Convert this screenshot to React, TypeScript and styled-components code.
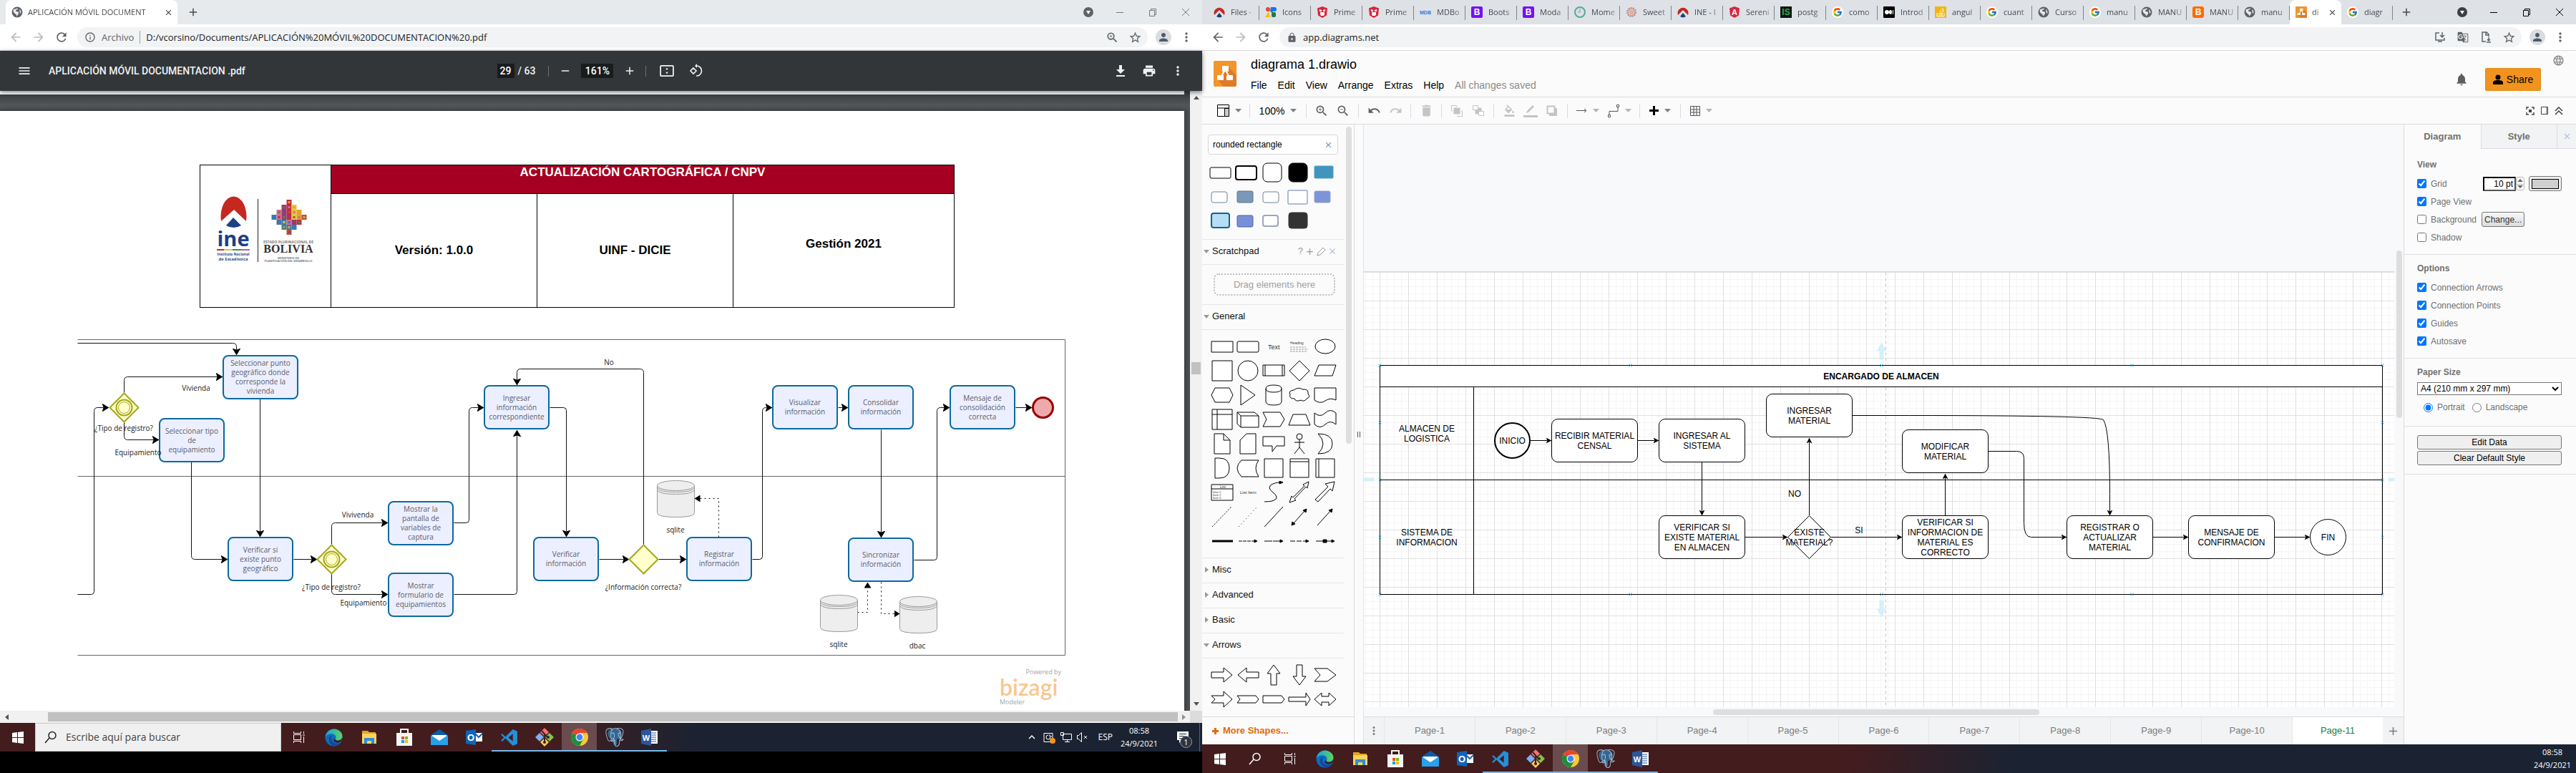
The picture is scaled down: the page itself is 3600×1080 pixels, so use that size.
import React from 'react';
import styled, { createGlobalStyle, css } from 'styled-components';
import {
  MdArrowBack, MdArrowForward, MdRefresh, MdInfoOutline, MdZoomIn, MdZoomOut, MdStarBorder, MdPerson,
  MdMoreVert, MdMenu, MdRemove, MdAdd, MdClose, MdPrint, MdLock, MdNotifications, MdLanguage, MdDelete,
  MdUndo, MdRedo, MdFormatColorFill, MdGTranslate, MdKeyboardArrowUp,
} from 'react-icons/md';
import { FcGoogle } from 'react-icons/fc';
import { SiPostgresql } from 'react-icons/si';

const ui = '"Open Sans", "Noto Sans", sans-serif';
const arial = '"Liberation Sans", Arial, sans-serif';

const Global = createGlobalStyle`
  * { box-sizing: border-box; }
  body { margin: 0; background: #000; font-family: ${arial}; }
  button, input, select { font-family: inherit; }
  button { padding: 0; border: 0; background: none; color: inherit; }
  svg { display: block; flex: none; }
`;

/* ---------- shared shell ---------- */

const Desktop = styled.div`
  display: flex;
  height: 100vh;
  overflow: hidden;
`;
const Screen = styled.section<{ $grow: number; $bottom?: number }>`
  flex: ${p => p.$grow} 1 0;
  min-width: 0;
  display: flex;
  flex-direction: column;
  padding-bottom: ${p => p.$bottom || 0}px;
`;
const TabStrip = styled.header<{ $bg: string }>`
  flex: none;
  height: 34px;
  display: flex;
  align-items: center;
  padding-left: 8px;
  background: ${p => p.$bg};
  font: 11px/16px ${ui};
  color: #45494d;
`;
const Tab = styled.div<{ $w: number; $active?: boolean }>`
  flex: 0 1 ${p => p.$w}px;
  min-width: 0;
  height: 34px;
  display: flex;
  align-items: center;
  gap: 8px;
  padding: 0 6px 0 8px;
  position: relative;
  ${p => p.$active ? css`gap: 7px; background: #fff; border-radius: 8px 8px 0 0;` : css`
    &::after { content: ''; position: absolute; right: 0; top: 8px; height: 20px; width: 1px; background: #808387; }
  `}
`;
const TabText = styled.span`
  flex: 1;
  min-width: 0;
  overflow: hidden;
  white-space: nowrap;
  mask-image: linear-gradient(90deg, #000 calc(100% - 12px), rgba(0, 0, 0, .4));
`;
const StripButton = styled.button<{ $w?: number; $end?: boolean }>`
  width: ${p => p.$w || 46}px;
  height: 30px;
  display: grid;
  place-items: center;
  ${p => p.$end && 'margin-left: auto;'}
`;
const TabClose = styled.button`
  display: grid;
  place-items: center;
  color: #3c4043;
`;
const NavBar = styled.nav`
  flex: none;
  height: 37px;
  display: flex;
  align-items: center;
  padding: 0 6px;
  background: #fff;
  border-bottom: 1px solid #dadce0;
  color: #5f6368;
`;
const NavButton = styled.button<{ $dim?: boolean }>`
  width: 32px;
  height: 28px;
  display: grid;
  place-items: center;
  flex: none;
  color: ${p => p.$dim ? '#babcbe' : '#5f6368'};
`;
const Omnibox = styled.div`
  flex: 1;
  min-width: 0;
  height: 28px;
  margin: 0 6px;
  padding: 0 2px 0 10px;
  display: flex;
  align-items: center;
  gap: 8px;
  border-radius: 14px;
  background: #f1f3f4;
`;
const Chip = styled.span`
  padding-right: 8px;
  border-right: 1px solid #9aa0a6;
  color: #5f6368;
  font: 13px/18px ${ui};
`;
const Address = styled.input`
  flex: 1;
  min-width: 0;
  border: 0;
  padding: 0;
  background: none;
  color: #202124;
  font: 13px/20px ${ui};
  outline: 0;
`;
const OmniActions = styled.div` display: flex; `;
const Avatar = styled.span`
  width: 22px;
  height: 22px;
  border-radius: 50%;
  background: #dadce0;
  color: #4d5a70;
  display: grid;
  place-items: center;
`;

const WindowControls = ({ color, dot }: { color: string; dot: string }) => (
  <>
    <StripButton $end $w={42} aria-label="Search tabs">
      <svg width="16" height="16" viewBox="0 0 16 16"><circle cx="8" cy="8" r="7" fill={dot} /><path d="M5 6h6l-3 5z" fill="#fff" /></svg>
    </StripButton>
    <StripButton aria-label="Minimize"><svg width="12" height="12"><path d="M1 6.500h10" stroke={color} /></svg></StripButton>
    <StripButton aria-label="Restore">
      <svg width="12" height="12" fill="none" stroke={color}><path d="M1.500 3.500h7v8h-7zM3.500 3.500v-2h7v8h-2" /></svg>
    </StripButton>
    <StripButton aria-label="Close window"><svg width="12" height="12"><path d="M1 1l10 10M11 1L1 11" stroke={color} /></svg></StripButton>
  </>
);

/* ---------- favicons ---------- */

const Globe = () => (
  <svg width="16" height="16" viewBox="0 0 16 16">
    <circle cx="8" cy="8" r="7.500" fill="#5f6368" />
    <path d="M3 4c3 0 4-2 6-1 0 2-3 1-3 3s4 0 4 3-2 2-2 5c-1-1-1-3-3-4S2 7 3 4zM11 4c2 1 3 3 2 6-2-1-1-3-2-6z" fill="#e8eaed" />
  </svg>
);
const Ine = () => (
  <svg width="16" height="16" viewBox="0 0 16 16">
    <path d="M1 12A7.500 7.500 0 1 1 15 12L8 5z" fill="#c4281f" />
    <path d="M8 9l4 5a7 7 0 0 1-8 0z" fill="#1d3f7c" />
  </svg>
);
const Badge = ({ bg, text, fg = '#fff', size = 12, r = 2 }: { bg: string; text: string; fg?: string; size?: number; r?: number }) => (
  <svg width="16" height="16" viewBox="0 0 16 16">
    <rect width="16" height="16" rx={r} fill={bg} />
    <text x="8" y={8 + size * 0.36} fontSize={size} fontFamily="Liberation Sans, sans-serif" fontWeight="700" textAnchor="middle" fill={fg}>{text}</text>
  </svg>
);
const Shield = ({ text }: { text?: string }) => (
  <svg width="16" height="16" viewBox="0 0 16 16">
    <path d="M8 0l7 2.500-1 10L8 16l-6-3.500L1 2.500z" fill="#d9253d" />
    {text
      ? <text x="8" y="12" fontSize="11" fontFamily="Liberation Sans, sans-serif" fontWeight="700" textAnchor="middle" fill="#fff">{text}</text>
      : <path d="M4 4l3 1v2H4zM12 4L9 5v2h3zM5 8h6v3l-1 2H6l-1-2z" fill="#fff" />}
  </svg>
);
const Palette = () => (
  <svg width="16" height="16" viewBox="0 0 16 16">
    <circle cx="4" cy="4" r="3" fill="#ea4335" /><path d="M0 15l5-8 2 8z" fill="#fbbc04" /><path d="M8 1h6l-4 8-3-2z" fill="#1a73e8" />
    <circle cx="13" cy="4" r="3" fill="#1a73e8" /><rect x="9" y="8" width="6" height="7" rx="2" fill="#188038" />
  </svg>
);
const Clock = () => (
  <svg width="16" height="16" viewBox="0 0 16 16" fill="none" stroke="#56a99a" strokeWidth="2"><circle cx="8" cy="8" r="7" /><path d="M8 3v5H5" strokeWidth="1" /></svg>
);
const Sweet = () => (
  <svg width="16" height="16" viewBox="0 0 16 16"><circle cx="8" cy="8" r="5.500" fill="#f0c8a8" stroke="#b58fa4" strokeWidth="3" strokeDasharray="2 1" /><circle cx="8" cy="8" r="2" fill="none" stroke="#e5866b" /></svg>
);
const Medium = () => (
  <svg width="16" height="16" viewBox="0 0 16 16"><rect width="16" height="16" rx="1" /><circle cx="5" cy="8" r="3" fill="#fff" /><ellipse cx="10" cy="8" rx="2" ry="3" fill="#fff" /><path d="M13.500 5v6" stroke="#fff" /></svg>
);
const Stack = () => (
  <svg width="16" height="16" viewBox="0 0 16 16"><rect width="16" height="16" fill="#f2b40f" /><path d="M3 9v5h10V9M5 12h6M5 9.500l6 1M6 6.500l5 3M8 4l4 4M10.500 2l2 5" stroke="#fff" fill="none" /></svg>
);
const Drawio = ({ w = 16, h = 16 }: { w?: number; h?: number }) => (
  <svg width={w} height={h} viewBox="0 0 32 36" preserveAspectRatio="none">
    <rect width="32" height="36" rx="2" fill="#f2952a" />
    <path d="M20 8l12 12v14l-2 2H14l-8-9z" fill="#de7b27" />
    <path d="M16 12l-6 12M16 12l7 12" stroke="#fff" strokeWidth="2" />
    <rect x="12" y="7" width="9" height="8" rx="1" fill="#fff" /><rect x="5" y="20" width="9" height="7" rx="1" fill="#fff" /><rect x="18" y="20" width="9" height="7" rx="1" fill="#fff" />
  </svg>
);
const GIcon = () => <svg width="16" height="16"><circle cx="8" cy="8" r="8" fill="#fff" /><FcGoogle x="1" y="1" size={14} /></svg>;

const rightTabs: [React.ReactNode, string][] = [
  [<Ine />, 'Files ·'], [<Palette />, 'Icons'], [<Shield />, 'Prime'], [<Shield />, 'Prime'],
  [<Badge bg="none" text="MDB" fg="#2b7de9" size={7} />, 'MDBo'], [<Badge bg="#7411f4" text="B" />, 'Boots'],
  [<Badge bg="#7411f4" text="B" />, 'Moda'], [<Clock />, 'Mome'], [<Sweet />, 'Sweet'], [<Ine />, 'INE - I'],
  [<Shield text="A" />, 'Sereni'], [<Badge bg="#101510" text="IS" fg="#22b14c" r={0} />, 'postg'], [<GIcon />, 'como'],
  [<Medium />, 'Introd'], [<Stack />, 'angul'], [<GIcon />, 'cuant'], [<Globe />, 'Curso'], [<GIcon />, 'manu'],
  [<Globe />, 'MANU'], [<Badge bg="#ff6a00" text="B" r={3} />, 'MANU'], [<Globe />, 'manu'], [<Drawio />, 'di'], [<GIcon />, 'diagr'],
];

/* ---------- taskbar ---------- */

const Bar = styled.footer<{ $mid: number }>`
  flex: none;
  height: 40px;
  display: flex;
  align-items: stretch;
  background: linear-gradient(90deg, #431c1e 0 ${p => p.$mid - 6}%, #1b2332 ${p => p.$mid + 6}%);
  color: #fff;
  font: 12px/18px ${ui};
`;
const TaskButton = styled.button<{ $open?: boolean; $active?: boolean }>`
  width: 49px;
  display: grid;
  place-items: center;
  background: ${p => p.$active ? '#6b4c4e' : 'none'};
  border-top: 2px solid transparent;
  border-bottom: 2px solid ${p => p.$open ? '#76b9ed' : 'transparent'};
`;
const TaskSearch = styled.label`
  width: 344px;
  display: flex;
  align-items: center;
  gap: 12px;
  padding: 0 12px;
  background: #f0f0f0;
  border: 1px solid #c8c8c8;
  color: #222;
`;
const TaskInput = styled.input`
  flex: 1;
  min-width: 0;
  border: 0;
  padding: 0;
  background: none;
  font: 14px/20px ${ui};
  color: #444;
  outline: 0;
  &::placeholder { color: #444; opacity: 1; }
`;
const Tray = styled.div`
  margin-left: auto;
  display: flex;
  align-items: center;
  gap: 6px;
`;
const Lang = styled.span` padding-left: 8px; `;
const ClockText = styled.time<{ $w: number }>`
  width: ${p => p.$w}px;
  text-align: center;
  font-size: 11px;
`;
const ClockLine = styled.span` display: block; `;
const Notice = styled.button`
  position: relative;
  width: 48px;
  height: 40px;
  display: grid;
  place-items: center;
  border-right: 1px solid #5a616d;
  margin-right: 3px;
`;
const NoticeCount = styled.span`
  position: absolute;
  left: 20px;
  top: 18px;
  width: 17px;
  height: 17px;
  border-radius: 50%;
  border: 1px solid #9aa0a8;
  background: #2d3440;
  font: 11px/15px ${ui};
`;

const WinLogo = () => <svg width="18" height="18" viewBox="0 0 18 18"><path d="M1 3l7-1v7H1zM9 2l8-1v8H9zM1 10h7v7l-7-1zM9 10h8v8l-8-1z" fill="#fff" /></svg>;
const Lens = ({ c }: { c: string }) => <svg width="18" height="18" fill="none" stroke={c} strokeWidth="1.500"><circle cx="11" cy="6.500" r="5" /><path d="M7 10l-6 7" /></svg>;
const TaskView = () => <svg width="18" height="18" fill="none" stroke="#fff"><path d="M1.500 5.500h10v7h-10zM1.500 1v2.500h10V1M1.500 17v-2.500h10V17M15.500 1v3M15.500 8v9M14 6h3" /></svg>;
const Edge = () => (
  <svg width="25" height="25" viewBox="0 0 24 24">
    <defs><linearGradient id="edgeTop" x1="0" x2="1"><stop offset="0" stopColor="#1c9de0" /><stop offset="1" stopColor="#5bd65a" /></linearGradient></defs>
    <circle cx="12" cy="12" r="11.500" fill="#0d6cbd" />
    <path d="M0.500 11C2 4 7 .5 12 .5c7 0 11.500 5 11.500 9.500 0 4-3 6-6 6-2 0-4-1-3-2.500C16 9 12 7 9 7 5 7 2 9 .5 11z" fill="url(#edgeTop)" />
    <path d="M9 9c-2 6 2 11 8 11 2 0 4-1 5-2-1 3-5 5.500-9 5.500C5 22 3 11 9 9z" fill="#16479b" />
    <path d="M14 13.500c-1 1.500 1 2.500 3 2.500 2.500 0 5-1 6-3.500.5 4-3 6.500-6 6.500-5 0-7-5-3-5.500z" fill="#431c1e" />
  </svg>
);
const Folder = () => <svg width="24" height="24" viewBox="0 0 24 24"><path d="M2 3h8l2 2h9v5H2z" fill="#e5a51c" /><path d="M2 7h20v14H2z" fill="#fbd35f" /><path d="M5 13h14v8h-4v-4H9v4H5z" fill="#2f8fd8" /></svg>;
const Store = () => (
  <svg width="24" height="26" viewBox="0 0 24 26"><path d="M1 7h22v18H1z" fill="#f5f5f5" /><path d="M7 7V2h10v5" fill="none" stroke="#f5f5f5" strokeWidth="2" /><path d="M8 12h4v4H8z" fill="#f25022" /><path d="M13 12h4v4h-4z" fill="#7fba00" /><path d="M8 17h4v4H8z" fill="#00a4ef" /><path d="M13 17h4v4h-4z" fill="#ffb900" /></svg>
);
const Mail = () => <svg width="26" height="24" viewBox="0 0 26 24"><path d="M1 9L13 1l12 8v14H1z" fill="#0f5ca8" /><path d="M3 9h20v8H3z" fill="#fff" /><path d="M1 9l12 8 12-8v14H1z" fill="#29a0ea" /></svg>;
const Outlook = () => (
  <svg width="24" height="24" viewBox="0 0 24 24"><path d="M13 6h10v12H13z" fill="#fff" /><path d="M13 7l5 5 5-5" stroke="#0f65ba" strokeWidth="2" fill="none" /><path d="M0 3l14-2v22L0 21z" fill="#0f65ba" /><text x="7" y="17" textAnchor="middle" fontSize="13" fontWeight="700" fontFamily="Liberation Sans, sans-serif" fill="#fff">O</text></svg>
);
const VsCode = () => <svg width="25" height="25" viewBox="0 0 24 24"><path d="M17 1l6 2.500v17L17 23 7 13l-4 4-2-1 4-4-4-4 2-1 4 4zM17 7l-6 5 6 5z" fill="#2490d8" fillRule="evenodd" /></svg>;
const GitIcon = () => (
  <svg width="26" height="26" viewBox="0 0 26 26"><path d="M13 0l6 6-6 6-6-6z" fill="#f07470" /><path d="M6 7l6 6-6 6-6-6z" fill="#7faef5" /><path d="M20 7l6 6-6 6-6-6z" fill="#83c44c" /><path d="M13 14l6 6-6 6-6-6z" fill="#f5cb5c" /><path d="M9 4l8 9M13 9v11" stroke="#3a2422" strokeWidth="2" /><circle cx="13" cy="20" r="2" fill="#3a2422" /><circle cx="18" cy="13" r="2" fill="#3a2422" /></svg>
);
const Chrome = () => (
  <svg width="24" height="24" viewBox="0 0 24 24"><circle cx="12" cy="12" r="12" fill="#fcc934" /><path d="M12 12L1.600 6A12 12 0 0 1 22.400 6z" fill="#ea4335" /><path d="M12 12h11.500A12 12 0 0 0 22.400 6H12z" fill="#fcc934" /><path d="M12 12L1.600 6A12 12 0 0 0 12 24l5-9z" fill="#1e8e3e" /><circle cx="12" cy="12" r="5.500" fill="#fff" /><circle cx="12" cy="12" r="4.400" fill="#4285f4" /></svg>
);
const Postgres = () => (
  <svg width="26" height="26" viewBox="0 0 26 26">
    <path d="M5 3q8-4 16 0 4 4 0 12l-5 1v7q-3 3-5-1l-1-6-4-1Q1 8 5 3z" fill="#336791" />
    <SiPostgresql size={26} color="#b9d3e8" />
  </svg>
);
const Word = () => (
  <svg width="24" height="24" viewBox="0 0 24 24"><path d="M12 3h11v18H12z" fill="#fff" /><path d="M14 6h7M14 9h7M14 12h7M14 15h7M14 18h7" stroke="#2b579a" /><path d="M0 3l14-3v24L0 21z" fill="#2b579a" /><text x="7" y="17" textAnchor="middle" fontSize="11" fontWeight="700" fontFamily="Liberation Sans, sans-serif" fill="#fff">W</text></svg>
);

const TaskApps = () => (
  <>
    <TaskButton aria-label="Task view"><TaskView /></TaskButton>
    <TaskButton aria-label="Edge"><Edge /></TaskButton>
    <TaskButton aria-label="Explorer"><Folder /></TaskButton>
    <TaskButton aria-label="Store"><Store /></TaskButton>
    <TaskButton aria-label="Mail"><Mail /></TaskButton>
    <TaskButton aria-label="Outlook"><Outlook /></TaskButton>
    <TaskButton $open aria-label="Code"><VsCode /></TaskButton>
    <TaskButton $open aria-label="Git"><GitIcon /></TaskButton>
    <TaskButton $open $active aria-label="Chrome"><Chrome /></TaskButton>
    <TaskButton $open aria-label="PostgreSQL"><Postgres /></TaskButton>
    <TaskButton $open aria-label="Word"><Word /></TaskButton>
  </>
);

/* ---------- PDF viewer ---------- */

const PdfBar = styled.div`
  flex: none;
  height: 56px;
  display: grid;
  grid-template-columns: 1fr auto 1fr;
  align-items: center;
  background: #323639;
  color: #f1f1f1;
  font: 500 14px/20px Roboto, sans-serif;
  box-shadow: 0 2px 6px rgba(0, 0, 0, .5);
  z-index: 1;
`;
const PdfTitle = styled.div`
  display: flex;
  align-items: center;
  gap: 24px;
  padding-left: 24px;
  white-space: nowrap;
`;
const PdfCenter = styled.div` display: flex; align-items: center; `;
const PdfInput = styled.input<{ $w: number }>`
  width: ${p => p.$w}px;
  height: 20px;
  border: 0;
  padding: 0;
  background: #191b1c;
  color: #fff;
  text-align: center;
  font: inherit;
`;
const PdfTotal = styled.span` margin: 0 18px 0 5px; `;
const PdfSep = styled.i` width: 1px; height: 15px; background: #6c6f71; `;
const PdfButton = styled.button<{ $w: number }>` width: ${p => p.$w}px; display: grid; place-items: center; `;
const PdfActions = styled.div` display: flex; justify-content: flex-end; padding-right: 14px; `;

const PdfBody = styled.div` flex: 1; min-height: 0; display: flex; `;
const Viewer = styled.main`
  flex: 1;
  min-width: 0;
  display: flex;
  flex-direction: column;
  gap: 23px;
  padding-right: 8px;
  background: linear-gradient(#3c4043 5px, #525659 20px, #4a4e51 28px);
`;
const PrevPage = styled.div` flex: none; height: 5px; background: #fff; `;
const Paper = styled.article` flex: 1; min-height: 0; overflow: hidden; background: #fff; box-shadow: 0 0 5px rgba(0, 0, 0, .5); `;
const VScroll = styled.div`
  width: 17px;
  display: flex;
  flex-direction: column;
  align-items: center;
  justify-content: space-between;
  padding: 6px 0;
  background: #f1f1f1;
`;
const VThumb = styled.i` width: 13px; height: 17px; margin-bottom: 92px; background: #c1c1c1; `;
const HScroll = styled.div`
  flex: none;
  height: 17px;
  display: flex;
  align-items: center;
  background: #f1f1f1;
`;
const HThumb = styled.i` flex: 1; height: 13px; margin-left: 50px; background: #c1c1c1; `;
const ScrollEnd = styled.span` width: 17px; display: grid; place-items: center; `;
const Corner = styled.i` width: 17px; height: 17px; background: #dcdcdc; `;

const DocTable = styled.table`
  width: 1055px;
  margin: 75px 0 0 279px;
  border-collapse: collapse;
  table-layout: fixed;
  font: bold 17px/20px ${arial};
  color: #000;
  td, th { border: 1px solid #000; padding: 0; text-align: center; }
`;
const HeadCell = styled.th` height: 40px; background: #a50021; color: #fff; vertical-align: top; `;
const BodyCell = styled.td<{ $raise?: boolean }>` height: 159px; padding-bottom: ${p => p.$raise ? 18 : 0}px !important; `;

const LogoCell = () => {
  const colors = ['#c22b3a', '#e0a32e', '#3f8f4e', '#2d7fb5', '#8c3f78', '#e5c63a', '#b5523b', '#4a6fae', '#d96a8b'];
  const rows = [1, 3, 5, 7, 5, 3, 1];
  return (
    <svg width="182" height="150" viewBox="280 252 182 150">
      <path d="M309 306a18 28 0 1 1 35 0l-17-16z" fill="#c4281f" />
      <path d="M326 301l11 11a16 12 0 0 1-21 0z" fill="#1d3f86" />
      <text x="326" y="341" fontSize="29" fontWeight="700" fontFamily="Open Sans, sans-serif" textAnchor="middle" fill="#1d3f86">ine</text>
      <path d="M303 346h10" stroke="#c22b3a" strokeWidth="2" /><path d="M313 346h12" stroke="#e5c63a" strokeWidth="2" /><path d="M325 346h12" stroke="#3f8f4e" strokeWidth="2" /><path d="M337 346h12" stroke="#c05a9a" strokeWidth="2" />
      <g fontFamily="Open Sans, sans-serif" fontWeight="700" textAnchor="middle" fill="#2a4a8c">
        <text x="326" y="354" fontSize="5">Instituto Nacional</text><text x="326" y="361" fontSize="6">de Estadística</text>
      </g>
      <path d="M360.500 275v88" stroke="#222" />
      {rows.map((n, r) => Array.from({ length: n }, (_, i) => (
        <g key={`${r}-${i}`}>
          <rect x={404 - n * 3.5 + i * 7} y={276 + r * 7} width="7" height="7" fill={colors[(r * 4 + i * 5) % 9]} />
          <rect x={406 - n * 3.5 + i * 7} y={278 + r * 7} width="3" height="3" fill={colors[(r * 5 + i * 2 + 1) % 9]} />
        </g>
      )))}
      <g textAnchor="middle" fill="#777" fontFamily="Open Sans, sans-serif">
        <text x="403" y="337" fontSize="5">ESTADO PLURINACIONAL DE</text>
        <text x="403" y="359" fontSize="4">MINISTERIO DE</text><text x="403" y="363" fontSize="4">PLANIFICACIÓN DEL DESARROLLO</text>
      </g>
      <text x="403" y="350" fontSize="16" fontFamily="Liberation Serif, serif" textAnchor="middle" fill="#333">BOLIVIA</text>
    </svg>
  );
};

/* Diagram data is kept in screen units; every layer subtracts its own origin. */
const BpmnCanvas = styled.div`
  position: relative;
  width: 1381px;
  height: 520px;
  margin: 44px 0 0 108px;
  font: 10px/13px ${ui};
`;
const Task = styled.div<{ $x: number; $y: number; $w: number }>`
  position: absolute;
  left: ${p => p.$x - 108}px;
  top: ${p => p.$y - 474}px;
  width: ${p => p.$w}px;
  height: 62px;
  display: grid;
  place-items: center;
  text-align: center;
  white-space: pre;
  border: 2px solid #0a6a9f;
  border-radius: 8px;
  background: #ecefff;
  color: #5c5c68;
`;
const BpmnLabel = styled.span<{ $x: number; $y: number }>`
  position: absolute;
  left: ${p => p.$x - 168}px;
  top: ${p => p.$y - 481}px;
  width: 120px;
  text-align: center;
  color: #222;
`;
const Brand = styled.div`
  position: absolute;
  left: 1289px;
  top: 460px;
  width: 86px;
  display: flex;
  flex-direction: column;
  font: 9px/10px ${ui};
  color: #9aa9ad;
`;
const BrandTop = styled.span` align-self: flex-end; `;
const BrandName = styled.strong` font: 600 32px/32px Lato, sans-serif; color: #fac78f; `;

const tasks: [number, number, number, string][] = [
  [311, 496, 106, 'Seleccionar punto\ngeográfico donde\ncorresponde la\nvivienda'],
  [222, 584, 92, 'Seleccionar tipo\nde\nequipamiento'],
  [318, 750, 92, 'Verificar si\nexiste punto\ngeográfico'],
  [542, 700, 92, 'Mostrar la\npantalla de\nvariables de\ncaptura'],
  [542, 800, 92, 'Mostrar\nformulario de\nequipamientos'],
  [676, 538, 92, 'Ingresar\ninformación\ncorrespondiente'],
  [745, 750, 92, 'Verificar\ninformación'],
  [959, 750, 92, 'Registrar\ninformación'],
  [1079, 538, 92, 'Visualizar\ninformación'],
  [1185, 538, 92, 'Consolidar\ninformación'],
  [1185, 751, 92, 'Sincronizar\ninformación'],
  [1327, 538, 92, 'Mensaje de\nconsolidación\ncorrecta'],
];
const bpmnLabels: [number, number, string][] = [
  [274, 543, 'Vivienda'], [173, 599, '¿Tipo de registro?'], [193, 633, 'Equipamiento'], [500, 720, 'Vivivenda'],
  [463, 821, '¿Tipo de registro?'], [508, 843, 'Equipamiento'], [851, 507, 'No'], [899, 821, '¿Información correcta?'],
  [944, 741, 'sqlite'], [1172, 901, 'sqlite'], [1282, 903, 'dbac'],
];
const bpmnFlows = [
  'M108 479H325q5 0 5 5V488', 'M108 830H127q4 0 4-4V574q0-5 5-5H144', 'M173 549V531q0-5 5-5H303', 'M173 589V609q0 5 5 5H214',
  'M363 557V742', 'M267 645V776q0 5 5 5H310', 'M410 781H435', 'M463 761V735q0-5 5-5H534', 'M463 801V825q0 5 5 5H534',
  'M634 730H651q4 0 4-4V574q0-5 5-5H668', 'M634 830H718q4 0 4-4V608', 'M768 569H787q4 0 4 4V742', 'M837 781H871',
  'M899 761V520q0-5-5-5H727q-5 0-5 5V530', 'M920 781H951', 'M1051 781H1061q4 0 4-4V574q0-5 5-5H1071', 'M1171 569H1177',
  'M1231 600V743', 'M1277 782H1305q4 0 4-4V574q0-5 5-5H1319', 'M1419 569H1434',
];
const dashed = ['M1004 750V696H978', 'M1198 855H1212V821', 'M1231 813V857H1249'];
const cylinders = [[918, 671], [1146, 831], [1257, 833]];

const Bpmn = () => (
  <BpmnCanvas>
    <svg width="1381" height="446" viewBox="107.500 473.500 1381 446">
      <defs>
        <marker id="bpmnArrow" viewBox="0 0 10 12" refX="2" refY="6" markerWidth="10" markerHeight="12" markerUnits="userSpaceOnUse" orient="auto"><path d="M0 0l10 6-10 6 2-6z" /></marker>
        <marker id="dashArrow" viewBox="0 0 8 10" refX="0" refY="5" markerWidth="8" markerHeight="10" markerUnits="userSpaceOnUse" orient="auto"><path d="M0 0l8 5-8 5z" /></marker>
      </defs>
      <path d="M108 474H1488V915H108M108 665H1488" fill="none" stroke="#666" />
      <g fill="none" stroke="#111">
        {bpmnFlows.map(d => <path key={d} d={d} markerEnd="url(#bpmnArrow)" />)}
        {dashed.map(d => <path key={d} d={d} strokeDasharray="2 4" markerEnd="url(#dashArrow)" />)}
      </g>
      {[[173, 569], [463, 781], [899, 781]].map(([x, y], i) => (
        <g key={x} fill="#ffffcc" stroke="#a6a61d" strokeWidth="2">
          <path d={`M${x - 20} ${y}L${x} ${y - 20}L${x + 20} ${y}L${x} ${y + 20}z`} />
          {i < 2 && <><circle cx={x} cy={y} r="11" /><circle cx={x} cy={y} r="8" strokeWidth="1" /></>}
        </g>
      ))}
      {cylinders.map(([x, y]) => (
        <g key={x} fill="#eee" stroke="#999">
          <path d={`M${x} ${y + 7}v38q0 6 26 6t26-6v-38`} />
          <ellipse cx={x + 26} cy={y + 7} rx="26" ry="7" />
          <path d={`M${x} ${y + 10}q3 6 26 6t26-6M${x} ${y + 13}q3 6 26 6t26-6`} fill="none" />
        </g>
      ))}
      <circle cx="1457" cy="569" r="14" fill="#eeaaaa" stroke="#990000" strokeWidth="3" />
    </svg>
    {tasks.map(([x, y, w, t]) => <Task key={`${x}-${y}`} $x={x} $y={y} $w={w}>{t}</Task>)}
    {bpmnLabels.map(([x, y, t]) => <BpmnLabel key={`${x}-${y}`} $x={x} $y={y}>{t}</BpmnLabel>)}
    <Brand><BrandTop>Powered by</BrandTop><BrandName>bizagi</BrandName><span>Modeler</span></Brand>
  </BpmnCanvas>
);

const LeftScreen = () => (
  <Screen $grow={7} $bottom={30}>
    <TabStrip $bg="#e7eaed">
      <Tab $w={240} $active>
        <Globe />
        <TabText>APLICACIÓN MÓVIL DOCUMENT</TabText>
        <TabClose aria-label="Close tab"><MdClose size={13} /></TabClose>
      </Tab>
      <StripButton $w={44} aria-label="New tab"><MdAdd size={18} /></StripButton>
      <WindowControls color="#777" dot="#5f6368" />
    </TabStrip>
    <NavBar>
      <NavButton $dim aria-label="Back"><MdArrowBack size={20} /></NavButton>
      <NavButton $dim aria-label="Forward"><MdArrowForward size={20} /></NavButton>
      <NavButton aria-label="Reload"><MdRefresh size={20} /></NavButton>
      <Omnibox>
        <MdInfoOutline size={16} />
        <Chip>Archivo</Chip>
        <Address aria-label="Address" readOnly value="D:/vcorsino/Documents/APLICACIÓN%20MÓVIL%20DOCUMENTACION%20.pdf" />
        <OmniActions>
          <NavButton aria-label="Zoom"><MdZoomIn size={19} /></NavButton>
          <NavButton aria-label="Bookmark"><MdStarBorder size={19} /></NavButton>
        </OmniActions>
      </Omnibox>
      <NavButton aria-label="Profile"><Avatar><MdPerson size={18} /></Avatar></NavButton>
      <NavButton aria-label="Menu"><MdMoreVert size={20} /></NavButton>
    </NavBar>
    <PdfBar>
      <PdfTitle><MdMenu size={20} /><span>APLICACIÓN MÓVIL DOCUMENTACION .pdf</span></PdfTitle>
      <PdfCenter>
        <PdfInput $w={24} aria-label="Page" defaultValue="29" />
        <PdfTotal>/ 63</PdfTotal>
        <PdfSep />
        <PdfButton $w={45} aria-label="Zoom out"><MdRemove size={18} /></PdfButton>
        <PdfInput $w={45} aria-label="Zoom level" defaultValue="161%" />
        <PdfButton $w={45} aria-label="Zoom in"><MdAdd size={18} /></PdfButton>
        <PdfSep />
        <PdfButton $w={58} aria-label="Fit to page">
          <svg width="20" height="16" viewBox="0 0 22 18" fill="none" stroke="#f1f1f1" strokeWidth="2"><rect x="1" y="1" width="20" height="16" rx="1" /><path d="M9 7l2-3 2 3zM9 11l2 3 2-3z" fill="#f1f1f1" strokeWidth="0" /></svg>
        </PdfButton>
        <PdfButton $w={24} aria-label="Rotate">
          <svg width="20" height="20" viewBox="0 0 20 20" fill="none" stroke="#f1f1f1" strokeWidth="1.700"><path d="M6 6l4 4-4 4-4-4zM11 3a7 7 0 1 1-1 14" /><path d="M11 0v6L8 3z" fill="#f1f1f1" strokeWidth="0" /></svg>
        </PdfButton>
      </PdfCenter>
      <PdfActions>
        <PdfButton $w={40} aria-label="Download"><svg width="14" height="18" viewBox="0 0 14 18"><path d="M5 1h4v6h4l-6 6-6-6h4zM1 15h12v2H1z" fill="#f1f1f1" /></svg></PdfButton>
        <PdfButton $w={40} aria-label="Print"><MdPrint size={20} /></PdfButton>
        <PdfButton $w={40} aria-label="More"><MdMoreVert size={20} /></PdfButton>
      </PdfActions>
    </PdfBar>
    <PdfBody>
      <Viewer>
        <PrevPage />
        <Paper>
          <DocTable>
            <colgroup><col width="183" /><col width="288" /><col width="274" /><col width="309" /></colgroup>
            <tbody>
              <tr><td rowSpan={2}><LogoCell /></td><HeadCell colSpan={3}>ACTUALIZACIÓN CARTOGRÁFICA / CNPV</HeadCell></tr>
              <tr><BodyCell>Versión: 1.0.0</BodyCell><BodyCell>UINF - DICIE</BodyCell><BodyCell $raise>Gestión 2021</BodyCell></tr>
            </tbody>
          </DocTable>
          <Bpmn />
        </Paper>
      </Viewer>
      <VScroll>
        <svg width="8" height="6"><path d="M0 6l4-5 4 5z" fill="#505050" /></svg>
        <VThumb />
        <svg width="8" height="6"><path d="M0 0l4 5 4-5z" fill="#505050" /></svg>
      </VScroll>
    </PdfBody>
    <HScroll>
      <ScrollEnd><svg width="6" height="8"><path d="M6 0L1 4l5 4z" fill="#505050" /></svg></ScrollEnd>
      <HThumb />
      <ScrollEnd><svg width="6" height="8"><path d="M0 0l5 4-5 4z" fill="#909090" /></svg></ScrollEnd>
      <Corner />
    </HScroll>
    <Bar $mid={52}>
      <TaskButton aria-label="Start"><WinLogo /></TaskButton>
      <TaskSearch><Lens c="#222" /><TaskInput aria-label="Buscar" placeholder="Escribe aquí para buscar" /></TaskSearch>
      <TaskApps />
      <Tray>
        <MdKeyboardArrowUp size={18} />
        <svg width="18" height="18" viewBox="0 0 18 18" fill="none" stroke="#fff"><path d="M2 3.500h12v12H2zM8 6a3 3 0 1 0 3 3M10 5v3h3" /><circle cx="14" cy="14" r="4" fill="#f7921e" stroke="none" /></svg>
        <svg width="17" height="16" viewBox="0 0 17 16" fill="none" stroke="#fff"><path d="M4.500 3.500h12v8h-12zM10.500 11v4M7 14.500h7M1.500 1.500h4v4h-4z" /></svg>
        <svg width="17" height="16" viewBox="0 0 17 16" fill="none" stroke="#fff"><path d="M1.500 5.500h2l4-4v13l-4-4h-2zM11 6l4 4M15 6l-4 4" /></svg>
        <Lang>ESP</Lang>
        <ClockText $w={62}><ClockLine>08:58</ClockLine><ClockLine>24/9/2021</ClockLine></ClockText>
        <Notice aria-label="Notifications">
          <svg width="18" height="16" viewBox="0 0 18 16"><path d="M1 0h16v12H8l-4 4v-4H1z" fill="#fff" /><path d="M4 3.500h10M4 6.500h10M4 9.500h6" stroke="#1b2332" /></svg>
          <NoticeCount>1</NoticeCount>
        </Notice>
      </Tray>
    </Bar>
  </Screen>
);

/* ---------- draw.io ---------- */

const line = '#dadce0';
const AppHeader = styled.header`
  flex: none;
  height: 65px;
  display: flex;
  align-items: flex-start;
  padding: 0 16px;
  background: #fbfbfb;
  border-bottom: 1px solid ${line};
  color: #000;
`;
const LogoBox = styled.div` margin: 14px 20px 0 0; `;
const FileName = styled.h1` margin: 8px 0; font: 18px/22px ${arial}; `;
const Menu = styled.nav`
  display: flex;
  gap: 15px;
  font: 14px/20px ${arial};
  button { font: inherit; }
`;
const Saved = styled.span` color: #8b8b8b; `;
const HeaderActions = styled.div` margin-left: auto; display: flex; color: #5f5f5f; `;
const HeaderButton = styled.button<{ $top: number }>` margin-top: ${p => p.$top}px; align-self: flex-start; `;
const Share = styled.button`
  width: 78px;
  height: 32px;
  margin: 24px 16px 0 23px;
  display: flex;
  align-items: center;
  justify-content: center;
  gap: 5px;
  border: 1px solid #e08a1a;
  border-radius: 2px;
  background: #f2931e;
  color: #000;
  font: 14px/16px ${arial};
`;
const Tools = styled.div`
  flex: none;
  height: 38px;
  display: flex;
  align-items: center;
  padding: 0 16px;
  background: #fbfbfb;
  border-bottom: 1px solid ${line};
`;
const Tool = styled.button<{ $w?: number; $off?: boolean }>`
  width: ${p => p.$w || 30}px;
  height: 30px;
  display: flex;
  align-items: center;
  justify-content: center;
  gap: 8px;
  color: ${p => p.$off ? '#c4c4c4' : '#5f5f5f'};
  font: 14px/16px ${arial};
`;
const Sep = styled.i` width: 1px; height: 20px; margin: 0 6px; background: ${line}; `;
const ToolsEnd = styled.div` margin-left: auto; display: flex; gap: 4px; `;
const MiniButton = styled.button` width: 16px; height: 16px; display: grid; place-items: center; `;
const Dark = styled.span` color: #000; `;
const Caret = ({ c = '#808080' }: { c?: string }) => <svg width="9" height="5"><path d="M0 0h9L4.500 5z" fill={c} /></svg>;

const Work = styled.div` flex: 1; min-height: 0; display: flex; `;
const SideCol = styled.aside`
  width: 213px;
  flex: none;
  display: flex;
  flex-direction: column;
  background: #fbfbfb;
  border-right: 1px solid ${line};
  font: 13px/16px ${arial};
`;
const SideScroll = styled.div` flex: 1; min-height: 0; display: flex; overflow: hidden; `;
const SideBody = styled.div` width: 198px; overflow: hidden; `;
const SideThumb = styled.i` width: 8px; height: 443px; margin: 3px 0 0 3px; border-radius: 4px; background: #dfdfdf; `;
const SearchBox = styled.label`
  display: flex;
  align-items: center;
  width: 182px;
  height: 28px;
  margin: 14px 8px 0;
  padding: 0 6px;
  border: 1px solid #d5d5d5;
  border-radius: 4px;
  background: #fff;
  color: #6a8ab8;
`;
const SearchInput = styled.input` flex: 1; min-width: 0; border: 0; padding: 0; outline: 0; font: 12px/16px ${arial}; color: #000; `;
const ShapeGrid = styled.div<{ $pad?: number }>`
  display: grid;
  grid-template-columns: repeat(5, 36px);
  grid-auto-rows: 34px;
  padding: ${p => p.$pad ? `${p.$pad}px 8px` : '6px 10px'};
`;
const ShapeCell = styled.button` display: grid; place-items: center; `;
const Section = styled.div`
  height: 35px;
  display: flex;
  align-items: center;
  padding-bottom: 2px;
  border-top: 1px solid #e5e5e5;
  color: #111;
`;
const SectionButton = styled.button` display: flex; align-items: center; gap: 4px; padding-left: 2px; font: inherit; `;
const SectionTools = styled.span` margin-left: auto; display: flex; align-items: center; gap: 2px; padding-right: 9px; color: #999; `;
const Divided = styled.div` border-top: 1px solid #e5e5e5; `;
const DropZone = styled.div`
  height: 31px;
  margin: 12px 12px 12px 16px;
  border: 2px dotted #bdbdbd;
  border-radius: 7px;
  color: #a0a0a0;
  text-align: center;
  line-height: 28px;
`;
const MoreShapes = styled.button`
  height: 39px;
  display: flex;
  align-items: center;
  gap: 5px;
  padding-left: 13px;
  border-top: 1px solid ${line};
  color: #df6c0c;
  font: bold 13px/16px ${arial};
`;
const Splitter = styled.div`
  width: 12px;
  flex: none;
  display: grid;
  place-items: center;
  background: #fbfbfb;
`;
const Stage = styled.main` flex: 1; min-width: 0; display: flex; flex-direction: column; background: #f8f9fb; border-left: 1px solid #e3e3e3; `;
const CanvasRow = styled.div` flex: 1; min-height: 0; display: flex; `;
const CanvasCol = styled.div` flex: 1; min-width: 0; padding-top: 205px; display: flex; `;
const Grid = styled.div`
  flex: 1;
  min-width: 0;
  position: relative;
  overflow: hidden;
  border-top: 1px solid #d8d8d8;
  background-color: #fff;
  background-image:
    linear-gradient(#e0e0e0 1px, transparent 1px), linear-gradient(90deg, #e0e0e0 1px, transparent 1px),
    linear-gradient(#f5f5f5 1px, transparent 1px), linear-gradient(90deg, #f5f5f5 1px, transparent 1px);
  background-size: 40px 40px, 40px 40px, 10px 10px, 10px 10px;
  background-position: 22px 0;
  font: 12px/14px ${arial};
  color: #000;
`;
const Flow = styled.svg` position: absolute; inset: 0; width: 100%; height: 100%; `;
const Node = styled.div<{ $x: number; $y: number; $w: number; $h: number; $round?: string; $border?: number }>`
  position: absolute;
  left: ${p => p.$x - 1906}px;
  top: ${p => p.$y - 380}px;
  width: ${p => p.$w}px;
  height: ${p => p.$h}px;
  display: grid;
  place-items: center;
  text-align: center;
  white-space: pre;
  ${p => p.$border !== 0 && css`border: ${p.$border || 1}px solid #000; background: #fff; border-radius: ${p.$round || '9px'};`}
`;
const HeadNode = styled(Node)` border: 0; border-radius: 0; background: #fff; font-weight: bold; `;
const VBar = styled.div` width: 13px; display: flex; justify-content: center; `;
const VBarThumb = styled.i` width: 8px; height: 234px; margin-top: 176px; border-radius: 4px; background: #dcdee0; `;
const HBar = styled.div` flex: none; height: 13px; padding-top: 3px; `;
const HBarThumb = styled.i` display: block; width: 456px; height: 8px; margin-left: 33.600%; border-radius: 4px; background: #dcdee0; `;
const PageTabs = styled.div`
  flex: none;
  height: 39px;
  display: flex;
  background: #f1f3f4;
  border-top: 1px solid ${line};
  font: 13px/16px ${arial};
  color: #7d7d7d;
`;
const PageTab = styled.button<{ $active?: boolean }>`
  flex: 0 1 127px;
  min-width: 0;
  border-left: 1px solid #e4e6e8;
  background: ${p => p.$active ? '#fff' : 'none'};
  color: ${p => p.$active ? '#188038' : 'inherit'};
  font: inherit;
`;
const PageButton = styled.button<{ $w: number }>` width: ${p => p.$w}px; display: grid; place-items: center; `;

/* format panel */
const Panel = styled.aside`
  width: 241px;
  flex: none;
  border-left: 1px solid ${line};
  background: #fbfbfb;
  color: #707070;
  font: 12px/16px ${arial};
`;
const PanelTabs = styled.div` display: grid; grid-template-columns: 1fr 1fr 27px; height: 34px; `;
const PanelTab = styled.button<{ $active?: boolean }>`
  display: grid;
  place-items: center;
  font: bold 13px/16px ${arial};
  color: #707070;
  ${p => !p.$active && css`background: #f1f3f4; border-left: 1px solid ${line}; border-bottom: 1px solid ${line};`}
`;
const PanelSection = styled.section<{ $top: number; $bottom: number }>`
  padding: ${p => p.$top}px 20px ${p => p.$bottom}px 18px;
  border-bottom: 1px solid #dedfe1;
`;
const PanelTitle = styled.h2` margin: 0 0 6px; font: bold 12px/16px ${arial}; color: #707070; `;
const Row = styled.div` height: 25px; display: flex; align-items: center; `;
const Check = styled.label` display: flex; align-items: center; gap: 6px; `;
const Box = styled.input` width: 13px; height: 13px; margin: 0; accent-color: #0075ff; `;
const GridSize = styled.input`
  width: 46px;
  height: 20px;
  margin-left: auto;
  padding: 0 2px 0 0;
  border: 2px inset #555;
  background: #fff;
  text-align: right;
  color: #000;
  font: 12px/14px ${arial};
`;
const Stepper = styled.span` width: 12px; height: 19px; margin-right: 6px; display: grid; grid-template-rows: 1fr 1fr; border: 1px solid #bbb; border-radius: 3px; `;
const Step = styled.button` display: grid; place-items: center; & + & { border-top: 1px solid #bbb; } `;
const PushButton = styled.button<{ $w?: number; $h?: number; $gap?: number }>`
  width: ${p => p.$w ? `${p.$w}px` : '100%'};
  height: ${p => p.$h || 20}px;
  margin-top: ${p => p.$gap || 0}px;
  display: grid;
  place-items: center;
  border: 1px solid #767676;
  border-radius: 3px;
  background: #efefef;
  color: #000;
  font: 12px/16px ${arial};
`;
const ChangeButton = styled(PushButton)` margin-left: 7px; background: linear-gradient(#f7f7f7, #dcdcdc); color: #333; `;
const Swatch = styled.i` width: 38px; height: 14px; border: 1px solid #000; background: #d0d0d0; `;
const SelectWrap = styled.div` position: relative; color: #000; `;
const PaperSelect = styled.select`
  width: 100%;
  height: 18px;
  padding: 0 4px;
  display: block;
  appearance: none;
  border: 1px solid #767676;
  border-radius: 0;
  background: #fff;
  color: #000;
  font: 12px/16px ${arial};
`;
const SelectArrow = styled.svg` position: absolute; right: 4px; top: 6px; pointer-events: none; `;
const Radios = styled.div` height: 20px; margin-top: 7px; padding-left: 9px; display: flex; align-items: center; gap: 10px; `;

const S = ({ children, fill = '#fff', stroke = '#000', sw = 1 }: { children: React.ReactNode; fill?: string; stroke?: string; sw?: number }) => (
  <svg width="32" height="32" viewBox="0 0 32 32" fill={fill} stroke={stroke} strokeWidth={sw}>{children}</svg>
);
const p = (d: string) => <S><path d={d} /></S>;

const searchShapes = [
  <S><rect x="1" y="9" width="29" height="15" rx="2" /></S>,
  <S sw={2}><rect x="1" y="7" width="29" height="19" rx="3" /></S>,
  <S><rect x="3" y="3" width="26" height="26" rx="6" /></S>,
  <S fill="#000"><rect x="3" y="3" width="26" height="26" rx="6" /></S>,
  <S fill="#3f95bd" stroke="#4d9fc8"><rect x="3" y="7" width="26" height="17" rx="1" /></S>,
  <S stroke="#6d8299"><rect x="3" y="9" width="22" height="15" rx="3" /></S>,
  <S fill="#7c98b8" stroke="#587593"><rect x="3" y="8" width="22" height="16" rx="2" /></S>,
  <S stroke="#6d8299"><rect x="3" y="9" width="22" height="15" rx="3" /></S>,
  <S stroke="#6478b8"><rect x="2" y="7" width="27" height="19" rx="1" /></S>,
  <S fill="#7d94d8" stroke="#8fa0c8"><rect x="3" y="8" width="22" height="16" rx="2" /></S>,
  <S fill="#b5ddf5" stroke="#14618f" sw={2}><rect x="3" y="5" width="25" height="20" rx="3" /></S>,
  <S fill="#7890d5" stroke="#4a62ad"><rect x="3" y="8" width="22" height="16" rx="2" /></S>,
  <S stroke="#9aa8b8" sw={2}><rect x="3" y="8" width="21" height="15" rx="3" /></S>,
  <S fill="#333" stroke="#333"><rect x="3" y="4" width="26" height="22" rx="4" /></S>,
];
const smallText = (x: number, y: number, size: number, t: string) => (
  <text x={x} y={y} fontSize={size} fontFamily="Liberation Sans, sans-serif" fill="#333" stroke="none">{t}</text>
);
const generalShapes = [
  p('M1 9h30v15H1z'),
  <S><rect x="1" y="9" width="30" height="15" rx="2" /></S>,
  <S>{smallText(8, 20, 9, 'Text')}</S>,
  <S>{smallText(3, 13, 5, 'Heading')}<path d="M3 17h22M3 20h25M3 23h23" stroke="#999" strokeDasharray="3 1" /></S>,
  <S><ellipse cx="16" cy="16" rx="14" ry="10" /></S>,
  p('M2 2h28v28H2z'),
  <S><circle cx="16" cy="16" r="14" /></S>,
  p('M1 8h30v15H1zM4 8v15M28 8v15'),
  p('M16 2l14 14-14 14L2 16z'),
  p('M7 8h24l-5 15H1z'),
  p('M6 6h20l5 10-5 10H6L1 16z'),
  p('M6 2l20 14L6 30z'),
  p('M5 7v18q0 5 11 5t11-5V7q0-5-11-5T5 7q0 5 11 5t11-5'),
  p('M8 9q7-5 12-1 9-1 8 6 4 5-2 7-3 5-8 2-7 3-9-2-8 0-6-6-3-5 5-6z'),
  p('M1 6h30v17q-8-4-15 1T1 23z'),
  p('M2 2h28v28H2zM9 2v28M2 9h28'),
  p('M1 6h24l6 5v16H6l-5-5zM1 6l5 5h25M6 11v16'),
  p('M1 6h24l6 10-6 10H1l5-10z'),
  p('M7 9h18l6 15H1z'),
  p('M1 7q8 7 15 0t15 0v16q-8-7-15 0t-15 0z'),
  p('M5 2h13l9 9v19H5zM18 2v9h9'),
  p('M14 2h13v28H5V11z'),
  p('M1 6h30v13H20l-6 8v-8H1z'),
  <S><circle cx="16" cy="6" r="4" /><path d="M16 10v11M9 14h14M16 21l-7 9M16 21l7 9" /></S>,
  p('M6 2q20 0 20 14T6 30q14-14 0-28z'),
  p('M6 2h6q14 0 14 14T12 30H6z'),
  p('M7 5h24q-8 11 0 23H7Q-5 16 7 5z'),
  p('M3 3h26v26H3z'),
  p('M3 3h26v26H3zM3 7h26'),
  p('M3 3h26v26H3zM7 3v26'),
  <S><path d="M1 5h30v22H1zM1 11h30" />{smallText(13, 10, 5, 'List')}{smallText(3, 17, 4, 'Item 1')}{smallText(3, 21, 4, 'Item 2')}{smallText(3, 25, 4, 'Item 3')}</S>,
  <S>{smallText(5, 18, 6, 'List Item')}</S>,
  <S fill="none"><path d="M3 29q18 0 17-7-1-3-5-6-10-8 0-12 4-2 10-2" /><path d="M24 0l5 2-5 2z" fill="#000" /></S>,
  p('M2 30l3-9 2 2L23 7l-2-2 8-4-2 9-2-2L9 25l2 2z'),
  p('M2 26L20 8l-4-4 13-3-3 13-3-3L6 29z'),
  <S><path d="M2 30L29 2" strokeDasharray="2 2" /></S>,
  <S><path d="M3 30L28 3" strokeDasharray="1 4" /></S>,
  p('M3 30L29 2'),
  <S><path d="M7 26L24 7" /><path d="M5 28l1-5 4 3zM26 5l-1 5-4-3z" fill="#000" /></S>,
  <S><path d="M5 28L24 7" /><path d="M26 5l-1 5-4-3z" fill="#000" /></S>,
  <S sw={3}><path d="M2 16h29" /></S>,
  ...['5 1', '11 1', '7 2'].map(d => <S key={d}><path d="M3 16h23" strokeDasharray={d} /><path d="M25 14l4 2-4 2z" fill="#000" /></S>),
  <S><path d="M3 16h23" /><path d="M13 14h5v4h-5zM25 14l4 2-4 2z" fill="#000" /></S>,
];
const arrowShapes = [
  p('M1 12h17V6l12 10-12 10v-6H1z'), p('M31 12H14V6L2 16l12 10v-6h17z'), p('M12 30V14H7L16 2l9 12h-5v16z'), p('M12 2v16H7l9 12 9-12h-5V2z'), p('M1 7h18l12 9-12 9H1l8-9z'),
  p('M1 11h17V5l12 11-12 11v-6H1l5-5z'), p('M1 11h26l4 5-4 5H1l4-5z'), p('M1 11h26l4 5-4 5H1z'), p('M1 13h24V7l6 9-6 9v-6H1z'), p('M1 16L11 7v5h10V7l10 9-10 9v-5H11v5z'),
];

const Head = ({ open, children, tools }: { open?: boolean; children: React.ReactNode; tools?: React.ReactNode }) => (
  <Section>
    <SectionButton>
      <svg width="8" height="8"><path d={open ? 'M0 2h8L4 7z' : 'M2 0l5 4-5 4z'} fill="#999" /></svg>
      {children}
    </SectionButton>
    {tools}
  </Section>
);
const Shapes = ({ items, pad }: { items: React.ReactNode[]; pad?: number }) => (
  <ShapeGrid $pad={pad}>{items.map((s, i) => <ShapeCell key={i} aria-label={`Shape ${i + 1}`}>{s}</ShapeCell>)}</ShapeGrid>
);

const flowEdges = [
  'M2138 615H2162', 'M2288 615H2312', 'M2378 645V714', 'M2438 750H2492', 'M2528 720V617', 'M2558 750H2652', 'M2718 720V667',
  'M2778 630H2818q10 0 10 10V730q0 20 10 20H2882', 'M2588 580H2668Q2934 580 2939 586Q2948 600 2948 690V714', 'M3008 750H3052', 'M3178 750H3222',
];
const marks: number[][] = [
  ...[1928, 2278, 2629, 2979, 3329].flatMap(x => [[x, 510], [x, 830]]),
  ...[590, 670, 750].flatMap(y => [[1928, y], [3329, y]]),
];
const flowNodes: [number, number, string][] = [
  [2168, 585, 'RECIBIR MATERIAL\nCENSAL'], [2318, 585, 'INGRESAR AL\nSISTEMA'], [2468, 550, 'INGRESAR\nMATERIAL'],
  [2318, 720, 'VERIFICAR SI\nEXISTE MATERIAL\nEN ALMACEN'], [2658, 600, 'MODIFICAR\nMATERIAL'],
  [2658, 720, 'VERIFICAR SI\nINFORMACION DE\nMATERIAL ES\nCORRECTO'], [2888, 720, 'REGISTRAR O\nACTUALIZAR\nMATERIAL'], [3058, 720, 'MENSAJE DE\nCONFIRMACION'],
];

const FlowCanvas = () => (
  <Grid>
    <HeadNode $x={1929} $y={511} $w={1400} $h={29}>ENCARGADO DE ALMACEN</HeadNode>
    <Flow>
      <defs><marker id="flowArrow" viewBox="0 0 8 8" refX="2" refY="4" markerWidth="8" markerHeight="8" markerUnits="userSpaceOnUse" orient="auto"><path d="M0 0l8 4-8 4 2-4z" /></marker></defs>
      <g transform="translate(-1905.500 -379.500)" fill="none" stroke="#000">
        <path d="M2635 380V510M2635 541V990" stroke="#c4c4c4" strokeDasharray="4 4" />
        <path d="M1928 510H3329V830H1928zM1928 540H3329M1928 670H3329M2059 540V830" />
        {flowEdges.map(d => <path key={d} d={d} markerEnd="url(#flowArrow)" />)}
        <path d="M2528 720l30 30-30 30-30-30z" fill="#fff" />
        <g fill="#d5effc" stroke="none">
          <path d="M2629 478l7 12h-4v12h-6v-12h-4zM2629 862l7-12h-4v-12h-6v12h-4zM1900 667h20v5h-20zM3337 667h20v5h-20z" />
        </g>
        <g stroke="#29b6f2">{marks.map(([x, y]) => <path key={`${x}-${y}`} d={`M${x - 2} ${y - 2}l4 4m0-4l-4 4`} />)}</g>
      </g>
    </Flow>
    <Node $x={1929} $y={541} $w={130} $h={129} $border={0}>{'ALMACEN DE\nLOGISTICA'}</Node>
    <Node $x={1929} $y={671} $w={130} $h={159} $border={0}>{'SISTEMA DE\nINFORMACION'}</Node>
    <Node $x={2088} $y={590} $w={51} $h={51} $round="50%" $border={2}>INICIO</Node>
    {flowNodes.map(([x, y, t]) => <Node key={`${x}-${y}`} $x={x} $y={y} $w={121} $h={61}>{t}</Node>)}
    <Node $x={2488} $y={720} $w={81} $h={61} $border={0}>{'EXISTE\nMATERIAL?'}</Node>
    <Node $x={2488} $y={680} $w={40} $h={20} $border={0}>NO</Node>
    <Node $x={2578} $y={731} $w={40} $h={20} $border={0}>SI</Node>
    <Node $x={3228} $y={725} $w={51} $h={51} $round="50%">FIN</Node>
  </Grid>
);

const CheckRow = ({ label, on, children }: { label: string; on?: boolean; children?: React.ReactNode }) => (
  <Row><Check><Box type="checkbox" defaultChecked={on} />{label}</Check>{children}</Row>
);

const FormatPanel = () => (
  <Panel>
    <PanelTabs><PanelTab $active>Diagram</PanelTab><PanelTab>Style</PanelTab><PanelTab aria-label="Close panel"><MdClose size={13} color="#a9b8d0" /></PanelTab></PanelTabs>
    <PanelSection $top={14} $bottom={11}>
      <PanelTitle>View</PanelTitle>
      <CheckRow label="Grid" on>
        <GridSize aria-label="Grid size" defaultValue="10 pt" />
        <Stepper>
          <Step aria-label="Increase"><svg width="8" height="4"><path d="M0 4l4-4 4 4z" fill="#666" /></svg></Step>
          <Step aria-label="Decrease"><svg width="8" height="4"><path d="M0 0l4 4 4-4z" fill="#666" /></svg></Step>
        </Stepper>
        <PushButton $w={46} $h={21} aria-label="Grid color"><Swatch /></PushButton>
      </CheckRow>
      <CheckRow label="Page View" on />
      <CheckRow label="Background"><ChangeButton $w={60} $h={21}>Change...</ChangeButton></CheckRow>
      <CheckRow label="Shadow" />
    </PanelSection>
    <PanelSection $top={11} $bottom={11}>
      <PanelTitle>Options</PanelTitle>
      <CheckRow label="Connection Arrows" on /><CheckRow label="Connection Points" on /><CheckRow label="Guides" on /><CheckRow label="Autosave" on />
    </PanelSection>
    <PanelSection $top={11} $bottom={16}>
      <PanelTitle>Paper Size</PanelTitle>
      <SelectWrap>
        <PaperSelect aria-label="Paper size"><option>A4 (210 mm x 297 mm)</option></PaperSelect>
        <SelectArrow width="10" height="7" fill="none" stroke="#000" strokeWidth="2"><path d="M1 1l4 4 4-4" /></SelectArrow>
      </SelectWrap>
      <Radios>
        <Check><Box type="radio" name="orient" defaultChecked />Portrait</Check>
        <Check><Box type="radio" name="orient" />Landscape</Check>
      </Radios>
    </PanelSection>
    <PanelSection $top={12} $bottom={12}>
      <PushButton>Edit Data</PushButton>
      <PushButton $gap={2}>Clear Default Style</PushButton>
    </PanelSection>
  </Panel>
);

const RightScreen = () => (
  <Screen $grow={8}>
    <TabStrip $bg="#dee1e6">
      {rightTabs.map(([icon, t], i) => (
        <Tab key={i} $w={72} $active={i === 21}>
          {icon}<TabText>{t}</TabText>
          {i === 21 && <TabClose aria-label="Close tab"><MdClose size={13} /></TabClose>}
        </Tab>
      ))}
      <StripButton $w={38} aria-label="New tab"><MdAdd size={18} /></StripButton>
      <WindowControls color="#000" dot="#3c4043" />
    </TabStrip>
    <NavBar>
      <NavButton aria-label="Back"><MdArrowBack size={20} /></NavButton>
      <NavButton $dim aria-label="Forward"><MdArrowForward size={20} /></NavButton>
      <NavButton aria-label="Reload"><MdRefresh size={20} /></NavButton>
      <Omnibox>
        <MdLock size={15} />
        <Address aria-label="Address" readOnly value="app.diagrams.net" />
        <OmniActions>
          <NavButton aria-label="Install"><svg width="16" height="16" fill="none" stroke="#5f6368" strokeWidth="1.500"><path d="M7 2H2v10h12V9M11 1v7M8 5l3 3 3-3M5 14h6" /></svg></NavButton>
          <NavButton aria-label="Translate"><MdGTranslate size={16} /></NavButton>
          <NavButton aria-label="Save page"><svg width="16" height="16" fill="none" stroke="#5f6368" strokeWidth="1.500"><path d="M8 14H3V1h6l3 3v3M8 1v4h4M12 8v5M10 11l2 2 2-2M9 15h6" /></svg></NavButton>
          <NavButton aria-label="Bookmark"><MdStarBorder size={19} /></NavButton>
        </OmniActions>
      </Omnibox>
      <NavButton aria-label="Profile"><Avatar><MdPerson size={18} /></Avatar></NavButton>
      <NavButton aria-label="Menu"><MdMoreVert size={20} /></NavButton>
    </NavBar>
    <AppHeader>
      <LogoBox><Drawio w={32} h={36} /></LogoBox>
      <div>
        <FileName>diagrama 1.drawio</FileName>
        <Menu>
          {['File', 'Edit', 'View', 'Arrange', 'Extras', 'Help'].map(m => <button key={m}>{m}</button>)}
          <Saved>All changes saved</Saved>
        </Menu>
      </div>
      <HeaderActions>
        <HeaderButton $top={30} aria-label="Notifications"><MdNotifications size={20} /></HeaderButton>
        <Share><svg width="14" height="14"><circle cx="7" cy="4" r="3.500" /><path d="M0 14v-3q0-2 5-3h4q5 1 5 3v3z" /></svg>Share</Share>
        <HeaderButton $top={5} aria-label="Language"><MdLanguage size={17} color="#8c8c8c" /></HeaderButton>
      </HeaderActions>
    </AppHeader>
    <Tools>
      <Tool $w={44} aria-label="View"><svg width="17" height="17" fill="none" stroke="#000"><path d="M10.500 5.500h6v11h-6z" fill="#ccc" /><path d="M.5.5h16v16H.5zM.5 5h16M10.500 5v11" /></svg><Caret /></Tool><Sep />
      <Tool $w={66}><Dark>100%</Dark><Caret /></Tool><Sep />
      <Tool aria-label="Zoom in"><MdZoomIn size={20} /></Tool><Tool aria-label="Zoom out"><MdZoomOut size={20} /></Tool><Sep />
      <Tool aria-label="Undo"><MdUndo size={19} /></Tool><Tool $off aria-label="Redo"><MdRedo size={19} /></Tool><Sep />
      <Tool $off aria-label="Delete"><MdDelete size={21} /></Tool><Sep />
      <Tool $off aria-label="To front"><svg width="16" height="16" fill="none" stroke="#c4c4c4"><path d="M4 4h8v8H4z" fill="#c4c4c4" /><path d="M2 8H.5V.5H8V2M8 15.500h7.500V8H14" /></svg></Tool>
      <Tool $off aria-label="To back"><svg width="16" height="16" fill="none" stroke="#c4c4c4"><path d="M4 4h8v8H4z" fill="#c4c4c4" /><path d="M.5.5h7v6h-7zM8.500 8.500h7v6h-7z" fill="#fbfbfb" /></svg></Tool><Sep />
      <Tool $off aria-label="Fill"><MdFormatColorFill size={17} /></Tool>
      <Tool $off aria-label="Line"><svg width="20" height="18"><path d="M4 12l1-3 8-8 2 2-8 8zM0 15h20v3H0z" fill="#c4c4c4" /></svg></Tool>
      <Tool $off aria-label="Shadow"><svg width="16" height="16"><path d="M4 4h11v11H4z" fill="#c4c4c4" /><path d="M1.500 1.500h10v10h-10z" fill="#fbfbfb" stroke="#c4c4c4" strokeWidth="2" /></svg></Tool><Sep />
      <Tool $w={44} aria-label="Connection"><svg width="15" height="9"><path d="M0 4.500h13M11 2l3 2.500L11 7" fill="none" stroke="#555" /></svg><Caret c="#b5b5b5" /></Tool>
      <Tool $w={44} aria-label="Waypoints"><svg width="16" height="18" fill="none" stroke="#555"><path d="M2 15V9.500h12V3M.5 14.500h3v3h-3zM12.500.5h3v3h-3z" /></svg><Caret c="#b5b5b5" /></Tool><Sep />
      <Tool $w={44} aria-label="Insert"><svg width="13" height="13"><path d="M6.500 0v13M0 6.500h13" stroke="#000" strokeWidth="3" /></svg><Caret /></Tool><Sep />
      <Tool $w={44} aria-label="Table"><svg width="14" height="14" fill="none" stroke="#555"><path d="M.5.5h13v13H.5zM.5 5h13M.5 9h13M5 .5v13M9 .5v13" /></svg><Caret c="#b5b5b5" /></Tool>
      <ToolsEnd>
        <MiniButton aria-label="Fullscreen"><svg width="12" height="12" fill="none" stroke="#444" strokeWidth="1.500"><path d="M1 4V1h3M8 1h3v3M11 8v3H8M4 11H1V8" /><path d="M4 4h4v4H4z" fill="#444" stroke="none" /></svg></MiniButton>
        <MiniButton aria-label="Format panel"><svg width="11" height="11" fill="none" stroke="#444"><path d="M.5.5h9v10h-9z" /><path d="M7 1h2v9H7z" fill="#aaa" stroke="none" /></svg></MiniButton>
        <MiniButton aria-label="Collapse"><svg width="12" height="12" fill="none" stroke="#444" strokeWidth="1.500"><path d="M1 6l5-5 5 5M1 11l5-5 5 5" /></svg></MiniButton>
      </ToolsEnd>
    </Tools>
    <Work>
      <SideCol>
        <SideScroll>
          <SideBody>
            <SearchBox><SearchInput aria-label="Search shapes" defaultValue="rounded rectangle" /><MdClose size={13} /></SearchBox>
            <Shapes items={searchShapes} pad={8} />
            <Head open tools={<SectionTools>?<MdAdd size={15} /><svg width="13" height="13" fill="none" stroke="#999"><path d="M1 12l1-4 7-7 3 3-7 7z" /></svg><MdClose size={14} color="#a9bcd8" /></SectionTools>}>Scratchpad</Head>
            <Divided><DropZone>Drag elements here</DropZone></Divided>
            <Head open>General</Head>
            <Divided><Shapes items={generalShapes} /></Divided>
            <Head>Misc</Head>
            <Head>Advanced</Head>
            <Head>Basic</Head>
            <Head open>Arrows</Head>
            <Divided><Shapes items={arrowShapes} /></Divided>
          </SideBody>
          <SideThumb />
        </SideScroll>
        <MoreShapes><svg width="11" height="11"><path d="M5.500 1v9M1 5.500h9" stroke="#df6c0c" strokeWidth="3" /></svg>More Shapes...</MoreShapes>
      </SideCol>
      <Splitter><svg width="4" height="8"><path d="M.5 0v8M3.500 0v8" stroke="#555" /></svg></Splitter>
      <Stage>
        <CanvasRow>
          <CanvasCol><FlowCanvas /></CanvasCol>
          <VBar><VBarThumb /></VBar>
        </CanvasRow>
        <HBar><HBarThumb /></HBar>
        <PageTabs>
          <PageButton $w={28} aria-label="Pages"><MdMoreVert size={18} /></PageButton>
          {Array.from({ length: 11 }, (_, i) => <PageTab key={i} $active={i === 10}>Page-{i + 1}</PageTab>)}
          <PageButton $w={29} aria-label="Insert page"><MdAdd size={19} /></PageButton>
        </PageTabs>
      </Stage>
      <FormatPanel />
    </Work>
    <Bar $mid={53}>
      <TaskButton aria-label="Start"><WinLogo /></TaskButton>
      <TaskButton aria-label="Search"><Lens c="#fff" /></TaskButton>
      <TaskApps />
      <Tray><ClockText $w={66}><ClockLine>08:58</ClockLine><ClockLine>24/9/2021</ClockLine></ClockText></Tray>
    </Bar>
  </Screen>
);

export default function App() {
  return (
    <>
      <Global />
      <Desktop>
        <LeftScreen />
        <RightScreen />
      </Desktop>
    </>
  );
}
